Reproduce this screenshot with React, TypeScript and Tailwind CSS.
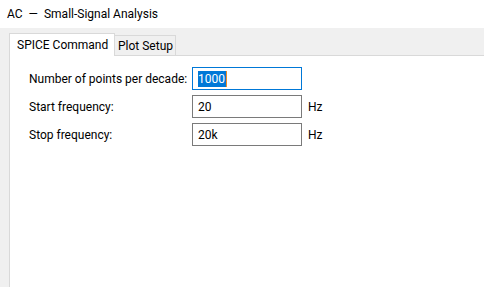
import React from "react";

const rows = [
  { label: "Number of points per decade:", value: "1000", unit: "", focused: true },
  { label: "Start frequency:", value: "20", unit: "Hz", focused: false },
  { label: "Stop frequency:", value: "20k", unit: "Hz", focused: false },
];

export default function App() {
  return (
    <div className="w-[484px] h-[287px] flex flex-col bg-white overflow-hidden text-[12px] text-black font-['Roboto',sans-serif] whitespace-nowrap">
      <div className="h-[28px] pl-[7px] flex items-center">
        <span>AC</span>
        <span className="px-[6px]">—</span>
        <span>Small-Signal Analysis</span>
      </div>

      <div className="flex-1 flex flex-col bg-[#f0f0f0] pl-[9px]">
        <div className="h-[27px] flex items-end">
          <div className="relative z-10 -mb-px h-[23px] w-[106px] bg-white border border-b-0 border-[#d9d9d9] pl-[7px] flex items-center">
            SPICE Command
          </div>
          <div className="h-[20px] w-[61px] bg-[#f0f0f0] border-t border-r border-[#d9d9d9] pl-[3px] pt-px flex items-center">
            Plot Setup
          </div>
        </div>

        <div className="flex-1 bg-white border-l border-t border-[#d9d9d9] pl-[19px] pt-[11px]">
          <div className="flex flex-col gap-[5px]">
            {rows.map((r) => (
              <div key={r.label} className="flex items-center h-[23px]">
                <div className="w-[163px]">{r.label}</div>
                <div
                  className={
                    r.focused
                      ? "w-[110px] h-[23px] border border-[#0078d7] flex items-center pl-[5px]"
                      : "w-[110px] h-[23px] border border-[#7a7a7a] flex items-center pl-[5px]"
                  }
                >
                  {r.focused ? (
                    <span className="bg-[#0078d7] text-white leading-[16px] pr-px border-r border-[#f08a24]">
                      {r.value}
                    </span>
                  ) : (
                    <span>{r.value}</span>
                  )}
                </div>
                <div className="pl-[6px]">{r.unit}</div>
              </div>
            ))}
          </div>
        </div>
      </div>
    </div>
  );
}
